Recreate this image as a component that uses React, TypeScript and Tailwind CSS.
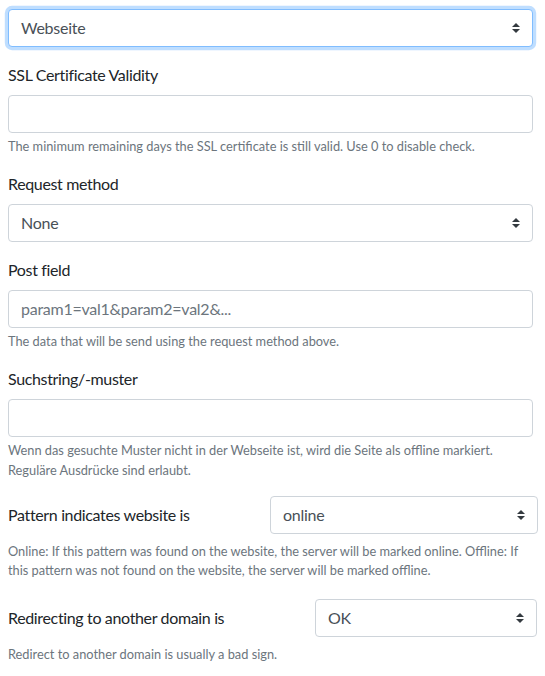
import React from "react";

const font = { fontFamily: 'Lato, "Open Sans", sans-serif' };

function Arrow() {
  return (
    <svg width="8" height="10" viewBox="0 0 4 5" className="absolute right-[12px] top-1/2 -translate-y-1/2">
      <path fill="#343a40" d="M2 0L0 2h4zm0 5L0 3h4z" />
    </svg>
  );
}

function Select({ value, focus = false, className = "" }: { value: string; focus?: boolean; className?: string }) {
  return (
    <div
      className={
        "relative h-[38px] rounded-[4px] border bg-white flex items-center pl-[12px] text-[16px] tracking-[-0.25px] text-[#495057] " +
        (focus
          ? "border-[#80bdff] shadow-[0_0_0_3.2px_rgba(0,123,255,0.25)] "
          : "border-[#ced4da] ") +
        className
      }
    >
      <span className="leading-[24px]">{value}</span>
      <Arrow />
    </div>
  );
}

function Input({ placeholder = "" }: { placeholder?: string }) {
  return (
    <div className="h-[38px] rounded-[4px] border border-[#ced4da] bg-white flex items-center pl-[12px] text-[16px] tracking-[-0.25px] text-[#6c757d]">
      <span className="leading-[24px]">{placeholder}</span>
    </div>
  );
}

function Label({ children }: { children: React.ReactNode }) {
  return <div className="text-[16px] leading-[24px] tracking-[-0.35px] text-[#212529] mb-[8px]">{children}</div>;
}

function Help({ children, className = "" }: { children: React.ReactNode; className?: string }) {
  return <div className={"text-[12.8px] leading-[19.2px] text-[#6c757d] " + className}>{children}</div>;
}

export default function App() {
  return (
    <div className="w-[545px] h-[676px] bg-white pl-[8px] pt-[9px] overflow-hidden" style={font}>
      <div className="w-[525px]">
        <div className="mb-[16px]">
          <Select value="Webseite" focus />
        </div>
        <div className="mb-[16px]">
          <Label>SSL Certificate Validity</Label>
          <Input />
          <Help className="mt-[4px]">The minimum remaining days the SSL certificate is still valid. Use 0 to disable check.</Help>
        </div>
        <div className="mb-[16px]">
          <Label>Request method</Label>
          <Select value="None" />
        </div>
        <div className="mb-[16px]">
          <Label>Post field</Label>
          <Input placeholder="param1=val1&param2=val2&..." />
          <Help className="mt-[4px]">The data that will be send using the request method above.</Help>
        </div>
        <div className="mb-[16px]">
          <Label>Suchstring/-muster</Label>
          <Input />
          <Help className="mt-[4px]">
            Wenn das gesuchte Muster nicht in der Webseite ist, wird die Seite als offline markiert.
            <br />
            Reguläre Ausdrücke sind erlaubt.
          </Help>
        </div>
      </div>
      <div className="w-[530px] mb-[19px]">
        <div className="flex items-center justify-between">
          <div className="text-[16px] leading-[24px] tracking-[-0.35px] text-[#212529]">Pattern indicates website is</div>
          <Select value="online" className="w-[268px]" />
        </div>
        <Help className="mt-[8px]">
          Online: If this pattern was found on the website, the server will be marked online. Offline: If
          <br />
          this pattern was not found on the website, the server will be marked offline.
        </Help>
      </div>
      <div className="w-[529px]">
        <div className="flex items-center justify-between">
          <div className="text-[16px] leading-[24px] tracking-[-0.35px] text-[#212529]">Redirecting to another domain is</div>
          <Select value="OK" className="w-[222px]" />
        </div>
        <Help className="mt-[8px]">Redirect to another domain is usually a bad sign.</Help>
      </div>
    </div>
  );
}
